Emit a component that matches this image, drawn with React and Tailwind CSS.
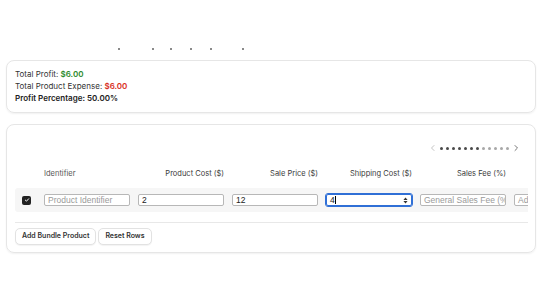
import React from "react";

const font = { fontFamily: "Inter, 'Noto Sans', sans-serif" };

function Chevron({ dir = "left", className }) {
  return (
    <svg viewBox="0 0 8 8" className={className} fill="none" stroke="currentColor" strokeWidth="1" strokeLinecap="round" strokeLinejoin="round">
      {dir === "left" ? <path d="M5 1.5 2.5 4 5 6.5" /> : <path d="M3 1.5 5.5 4 3 6.5" />}
    </svg>
  );
}

function Field({ value, placeholder, focused, spinner }) {
  return (
    <div
      className={
        "relative flex h-[12px] w-[86px] shrink-0 items-center overflow-hidden whitespace-nowrap rounded-[2px] bg-white px-[3px] text-[8.5px] leading-none " +
        (focused ? "border border-[#2f6fd6] outline outline-[0.5px] outline-[#2f6fd6]" : "border border-[#b7b7b7]")
      }
      style={{ fontFamily: "'Liberation Sans', Arial, sans-serif" }}
    >
      {value ? (
        <span className="text-[#222]">{value}</span>
      ) : (
        <span className="text-[#9a9a9a]">{placeholder}</span>
      )}
      {focused && <span className="ml-[0.5px] h-[8px] w-px bg-black" />}
      {spinner && (
        <svg viewBox="0 0 6 8" className="ml-auto h-[7px] w-[5px] shrink-0 text-[#333]" fill="currentColor">
          <path d="M3 0.5 5.5 3.3H0.5Z" />
          <path d="M3 7.5 0.5 4.7H5.5Z" />
        </svg>
      )}
    </div>
  );
}

export default function App() {
  const dots = Array.from({ length: 12 }, (_, i) => i);
  const headers = ["Product Cost ($)", "Sale Price ($)", "Shipping Cost ($)", "Sales Fee (%)"];
  const marks = [118, 152, 170, 190, 210, 242];

  return (
    <div className="min-h-[305px] w-[542px] bg-white pt-[48px]" style={font}>
      {/* descenders of a line scrolled out of view */}
      <div className="flex h-[3px]">
        {marks.map((x, i) => (
          <span
            key={x}
            className="h-[2px] w-[1.5px] bg-[#8a8a8a]"
            style={{ marginLeft: i === 0 ? x : x - marks[i - 1] - 1.5 }}
          />
        ))}
      </div>

      {/* summary card */}
      <div className="mx-[6px] mt-[9px] rounded-[8px] border border-[#e6e6e6] px-[8px] pb-[8px] pt-[7px] text-[8px] leading-[12px] text-[#333] shadow-[0_1px_2px_rgba(0,0,0,0.06)]">
        <div>
          Total Profit: <span className="font-semibold text-[#2e8b2e]">$6.00</span>
        </div>
        <div>
          Total Product Expense: <span className="font-semibold text-[#d93025]">$6.00</span>
        </div>
        <div className="font-semibold text-[#222]">Profit Percentage: 50.00%</div>
      </div>

      {/* products card */}
      <div className="mx-[6px] mt-[11px] rounded-[8px] border border-[#e6e6e6] px-[8px] pb-[7px] pt-[19px] shadow-[0_1px_2px_rgba(0,0,0,0.06)]">
        <div className="w-[513px] overflow-hidden">
          <div className="flex items-center justify-end pr-[8px]">
            <Chevron dir="left" className="h-[8px] w-[8px] text-[#c4c4c4]" />
            <div className="mx-[3px] flex gap-[3px]">
              {dots.map((i) => (
                <span
                  key={i}
                  className={"h-[3px] w-[3px] rounded-full " + (i < 7 ? "bg-[#4a4a4a]" : "bg-[#a8a8a8]")}
                />
              ))}
            </div>
            <Chevron dir="right" className="h-[8px] w-[8px] text-[#777]" />
          </div>

          <div className="mt-[17px] flex items-center pl-[29px] text-[7.5px] leading-[10px] text-[#3a3a3a]">
            <div className="w-[86px] shrink-0 text-left text-[#555]">Identifier</div>
            {headers.map((h) => (
              <div key={h} className="ml-[8px] w-[86px] shrink-0 text-right">
                {h}
              </div>
            ))}
          </div>

          <div className="mt-[9px] flex h-[24px] w-[640px] items-center rounded-[3px] bg-[#f6f6f6] pl-[7px]">
            <div className="flex h-[9px] w-[9px] shrink-0 items-center justify-center rounded-[2px] bg-[#222]">
              <svg viewBox="0 0 8 8" className="h-[6px] w-[6px]" fill="none" stroke="white" strokeWidth="1.3" strokeLinecap="round" strokeLinejoin="round">
                <path d="M1.8 4.2 3.3 5.6 6.2 2.4" />
              </svg>
            </div>
            <div className="ml-[13px] flex gap-[8px]">
              <Field placeholder="Product Identifier" />
              <Field value="2" />
              <Field value="12" />
              <Field value="4" focused spinner />
              <Field placeholder="General Sales Fee (%" />
              <Field placeholder="Adv" />
            </div>
          </div>

          <div className="mt-[10px] border-t border-[#e8e8e8]" />
        </div>

        <div className="mt-[5px] flex gap-[2px] text-[7px] font-semibold text-[#333]">
          <button className="h-[17px] rounded-[5px] border border-[#e2e2e2] bg-white px-[6px] shadow-[0_1px_1px_rgba(0,0,0,0.05)]">
            Add Bundle Product
          </button>
          <button className="h-[17px] rounded-[5px] border border-[#e2e2e2] bg-white px-[6px] shadow-[0_1px_1px_rgba(0,0,0,0.05)]">
            Reset Rows
          </button>
        </div>
      </div>
    </div>
  );
}
